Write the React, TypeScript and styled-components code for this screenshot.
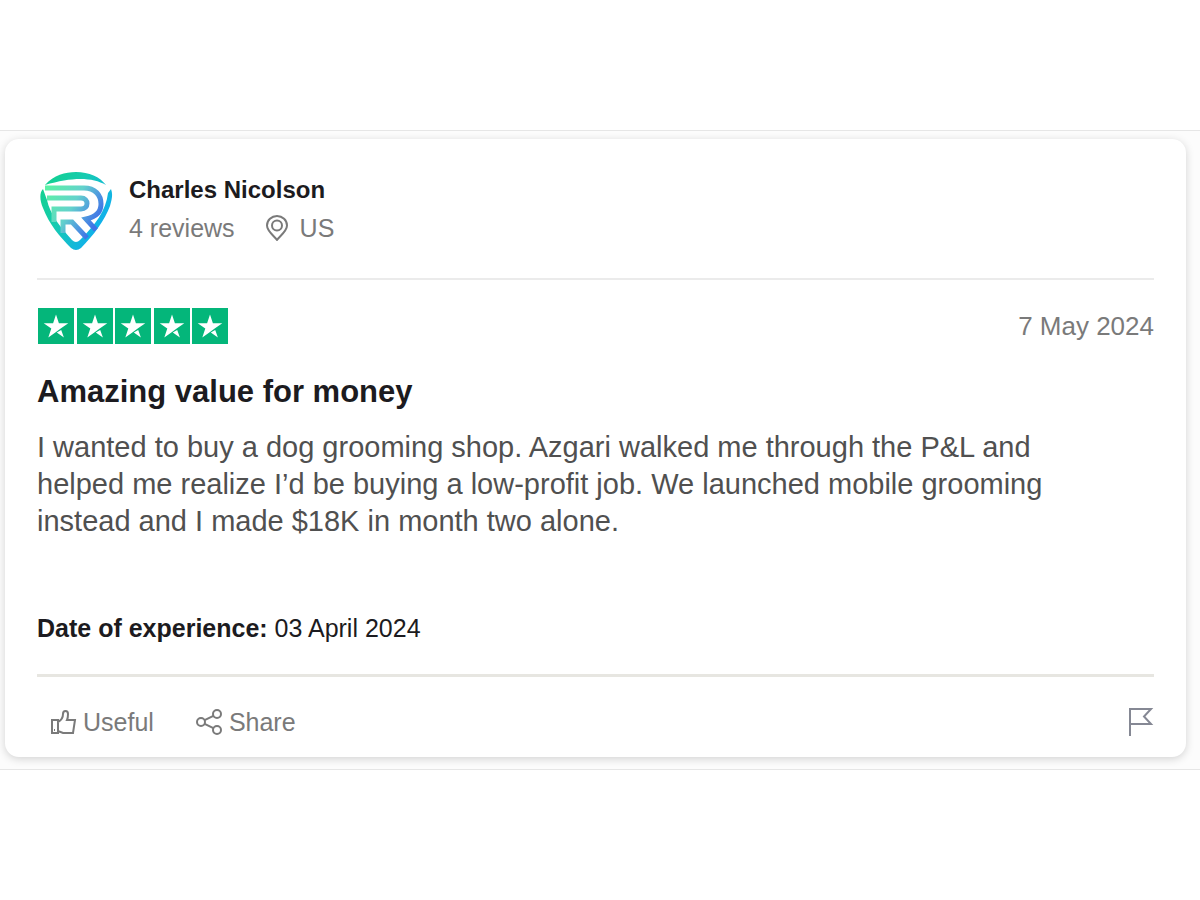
import React from 'react';
import styled, { createGlobalStyle } from 'styled-components';

const GlobalStyle = createGlobalStyle`
  * { box-sizing: border-box; }
  body {
    margin: 0;
    background: #fff;
    font-family: "Liberation Sans", Arial, Helvetica, sans-serif;
    color: #1c1b20;
  }
`;

const Page = styled.main`
  min-height: 100vh;
  display: flex;
  flex-direction: column;
  justify-content: center;
`;

const Band = styled.section`
  padding: 8px 14px 12px 5px;
  background: #fcfcfc;
  border-top: 1px solid #e6e6e6;
  border-bottom: 1px solid #e6e6e6;
`;

const Card = styled.article`
  padding: 32px 32px 16px;
  background: #fff;
  border-radius: 14px;
  box-shadow: 0 2px 8px rgba(0, 0, 0, 0.17);
`;

const Header = styled.header`
  display: flex;
  gap: 16px;
  height: 109px;
  border-bottom: 2px solid #ebebeb;
`;

const Avatar = styled.svg`
  width: 76px;
  height: 80px;
  flex: none;
`;

const Author = styled.div`
  display: flex;
  flex-direction: column;
`;

const Name = styled.strong`
  font-size: 24px;
  line-height: 38px;
`;

const Meta = styled.div`
  display: flex;
  align-items: center;
  font-size: 25px;
  line-height: 38px;
  color: #7a7a7a;
`;

const Place = styled.span`
  display: flex;
  align-items: center;
  gap: 11px;
  margin-left: 30px;
`;

const Icon = styled.svg<{ $w: number; $h: number }>`
  width: ${(p) => p.$w}px;
  height: ${(p) => p.$h}px;
  flex: none;
  fill: none;
  stroke: currentColor;
  stroke-width: 2;
`;

const RatingRow = styled.div`
  display: flex;
  justify-content: space-between;
  align-items: center;
  margin-top: 28px;
`;

const Stars = styled.div`
  display: flex;
  justify-content: space-between;
  width: 190px;
  margin-left: 1px;
`;

const Star = styled.svg`
  width: 36px;
  height: 36px;
`;

const Posted = styled.time`
  font-size: 26px;
  line-height: 36px;
  color: #7a7a7a;
`;

const Title = styled.h2`
  margin: 28px 0 0;
  font-size: 31px;
  line-height: 40px;
`;

const Review = styled.p`
  margin: 17px 0 0;
  font-size: 29px;
  line-height: 37px;
  color: #505050;
`;

const Experience = styled.p`
  margin: 70px 0 0;
  font-size: 25px;
  line-height: 36px;
`;

const Footer = styled.footer`
  display: flex;
  align-items: center;
  gap: 42px;
  margin-top: 28px;
  padding: 26px 0 0 13px;
  border-top: 3px solid #e7e6e1;
`;

const Action = styled.button`
  display: flex;
  align-items: center;
  gap: 6px;
  padding: 0;
  border: 0;
  background: none;
  font: inherit;
  font-size: 25px;
  line-height: 38px;
  color: #7a7a7a;
  cursor: pointer;
`;

const Flag = styled(Action)`
  margin-left: auto;
  color: #858894;
`;

export default function App() {
  return (
    <>
      <GlobalStyle />
      <Page>
        <Band>
          <Card>
            <Header>
              <Avatar viewBox="0 0 76 80" role="img" aria-label="Charles Nicolson" fill="none">
                <defs>
                  <linearGradient id="rim" x1="4" y1="10" x2="70" y2="50" gradientUnits="userSpaceOnUse">
                    <stop offset="0" stopColor="#12d18c" />
                    <stop offset="0.45" stopColor="#16cbb0" />
                    <stop offset="1" stopColor="#10aef0" />
                  </linearGradient>
                  <linearGradient id="letter" x1="10" y1="20" x2="60" y2="50" gradientUnits="userSpaceOnUse">
                    <stop offset="0" stopColor="#5cf0a6" />
                    <stop offset="0.5" stopColor="#63d2cc" />
                    <stop offset="0.8" stopColor="#4f96e0" />
                    <stop offset="1" stopColor="#3f73e6" />
                  </linearGradient>
                </defs>
                <path d="M8 14C17 4 28 1 39 1c13 0 24 5 30 13C55 6 35 6 8 14Z" fill="url(#rim)" />
                <path d="M6 18C2 22 3 30 6 37c6 16 17 29 28 40q5 4 10 0c12-12 24-28 29-42 2-7 3-12 1-17l-3 4C69 40 58 54 43 69q-4 4-8 0C23 56 13 43 10 29Z" fill="url(#rim)" />
                <g stroke="url(#letter)" strokeWidth="5">
                  <path d="M8 17H47c11 0 17 7 17 16 0 8-5 13-15 15L59 59" />
                  <path d="M10 27H44c8 0 8 11 0 11H17V51" />
                  <path d="M26 62V51H35L50 67" />
                </g>
              </Avatar>
              <Author>
                <Name>Charles Nicolson</Name>
                <Meta>
                  <span>4 reviews</span>
                  <Place>
                    <Icon $w={24} $h={26} viewBox="0 0 24 26" aria-hidden="true">
                      <path d="M12 25C9 21 2 16 2 10.500a10 9.500 0 0 1 20 0C22 16 15 21 12 25Z" />
                      <circle cx="12" cy="10.500" r="5" />
                    </Icon>
                    US
                  </Place>
                </Meta>
              </Author>
            </Header>
            <RatingRow>
              <Stars role="img" aria-label="Rated 5 out of 5 stars">
                {[1, 2, 3, 4, 5].map((n) => (
                  <Star key={n} viewBox="0 0 36 36">
                    <rect width="36" height="36" fill="#04b67a" />
                    <path d="M18 6.500 20.900 15.200H30.300L22.700 20.600 18 24 10.300 29.500 13.300 20.600 5.700 15.200H15.100ZM23.200 21.900 25.900 29.500 18.800 24.500Z" fill="#fff" />
                  </Star>
                ))}
              </Stars>
              <Posted dateTime="2024-05-07">7 May 2024</Posted>
            </RatingRow>
            <Title>Amazing value for money</Title>
            <Review>
              I wanted to buy a dog grooming shop. Azgari walked me through the P&amp;L and
              <br />
              helped me realize I’d be buying a low-profit job. We launched mobile grooming
              <br />
              instead and I made $18K in month two alone.
            </Review>
            <Experience>
              <b>Date of experience:</b> 03 April 2024
            </Experience>
            <Footer>
              <Action type="button">
                <Icon $w={27} $h={26} viewBox="0 0 27 26" aria-hidden="true">
                  <path d="M2 11H8V24H2ZM8 13C12 11 13 8 13 5c0-4 5-4 5 0 0 2 0 4-1 6h8L23 24H13L8 22M4 21h1" />
                </Icon>
                Useful
              </Action>
              <Action type="button">
                <Icon $w={27} $h={26} viewBox="0 0 27 26" aria-hidden="true">
                  <circle cx="5" cy="13" r="4" />
                  <circle cx="21" cy="5" r="4" />
                  <circle cx="21" cy="21" r="4" />
                  <path d="M8.600 11.200 17.400 6.800M8.600 14.800 17.400 19.200" />
                </Icon>
                Share
              </Action>
              <Flag type="button" aria-label="Report review">
                <Icon $w={26} $h={30} viewBox="0 0 26 30" aria-hidden="true">
                  <path d="M2 29V2H23L16 9.500 23 17H2" />
                </Icon>
              </Flag>
            </Footer>
          </Card>
        </Band>
      </Page>
    </>
  );
}
